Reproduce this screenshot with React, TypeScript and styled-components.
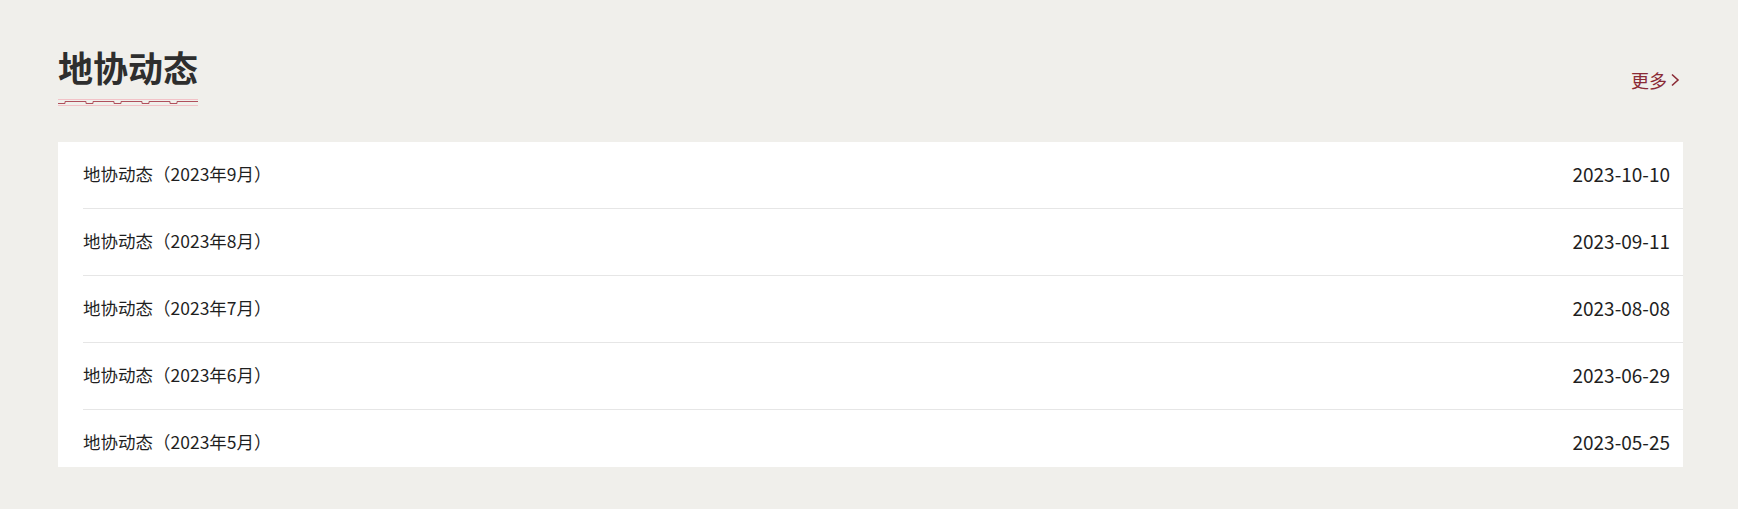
import React from 'react';
import styled, { createGlobalStyle } from 'styled-components';

const GlobalStyle = createGlobalStyle`
    body {
        margin: 0;
        background: #f0efeb;
        font-family: "Noto Sans CJK SC", "Noto Sans", sans-serif;
        color: #222;
    }
`;

const Section = styled.section`
    width: 1625px;
    padding: 42px 55px 40px 58px;
`;

const Header = styled.div`
    display: flex;
    align-items: flex-end;
    justify-content: space-between;
    margin-bottom: 36px;
`;

const TitleBlock = styled.div`
    display: flex;
    flex-direction: column;
    gap: 7px;
`;

const Title = styled.h2`
    margin: 0;
    font-size: 35px;
    line-height: 50px;
    font-weight: 700;
    color: #2e2e2e;
    letter-spacing: 0;
`;

const MoreLink = styled.a`
    display: flex;
    align-items: center;
    gap: 3px;
    margin: 0 3px 13px 0;
    font-size: 18px;
    line-height: 26px;
    color: #8a2a35;
    text-decoration: none;
    cursor: pointer;
`;

const Card = styled.ul`
    list-style: none;
    margin: 0;
    padding: 0;
    height: 325px;
    overflow: hidden;
    background: #fff;
`;

const Row = styled.li`
    display: flex;
    align-items: center;
    justify-content: space-between;
    box-sizing: border-box;
    height: 67px;
    margin-left: 25px;
    padding: 0 13px 4px 0;
    border-bottom: 1px solid #e6e6e6;
    color: #1f1f1f;
`;

const RowTitle = styled.span`
    font-size: 17.5px;
    cursor: pointer;
`;

const RowDate = styled.span`
    font-size: 19px;
`;

const news = [
    { title: '地协动态（2023年9月）', date: '2023-10-10' },
    { title: '地协动态（2023年8月）', date: '2023-09-11' },
    { title: '地协动态（2023年7月）', date: '2023-08-08' },
    { title: '地协动态（2023年6月）', date: '2023-06-29' },
    { title: '地协动态（2023年5月）', date: '2023-05-25' },
];

// 标题下方的回纹装饰
const Pattern = () => (
    <svg width="140" height="7" viewBox="0 0 140 7">
        <line x1="0" y1="0.5" x2="140" y2="0.5" stroke="#f2c2c7" strokeWidth="1" />
        <line x1="0" y1="6.5" x2="140" y2="6.5" stroke="#f2c2c7" strokeWidth="1" />
        <path
            d="M0 4.5 H7 V2.5 H28 V4.5 H35 V2.5 H56 V4.5 H63 V2.5 H84 V4.5 H91 V2.5 H112 V4.5 H119 V2.5 H140"
            fill="none"
            stroke="#b0505c"
            strokeWidth="1"
        />
    </svg>
);

const App: React.FC = () => {
    return (
        <>
            <GlobalStyle />
            <Section>
                <Header>
                    <TitleBlock>
                        <Title>地协动态</Title>
                        <Pattern />
                    </TitleBlock>
                    <MoreLink>
                        更多
                        <svg width="10" height="14" viewBox="0 0 10 14">
                            <polyline
                                points="2,1.5 8,7 2,12.5"
                                fill="none"
                                stroke="#8a2a35"
                                strokeWidth="1.6"
                            />
                        </svg>
                    </MoreLink>
                </Header>
                <Card>
                    {news.map((item) => (
                        <Row key={item.date}>
                            <RowTitle>{item.title}</RowTitle>
                            <RowDate>{item.date}</RowDate>
                        </Row>
                    ))}
                </Card>
            </Section>
        </>
    );
};

export default App;
